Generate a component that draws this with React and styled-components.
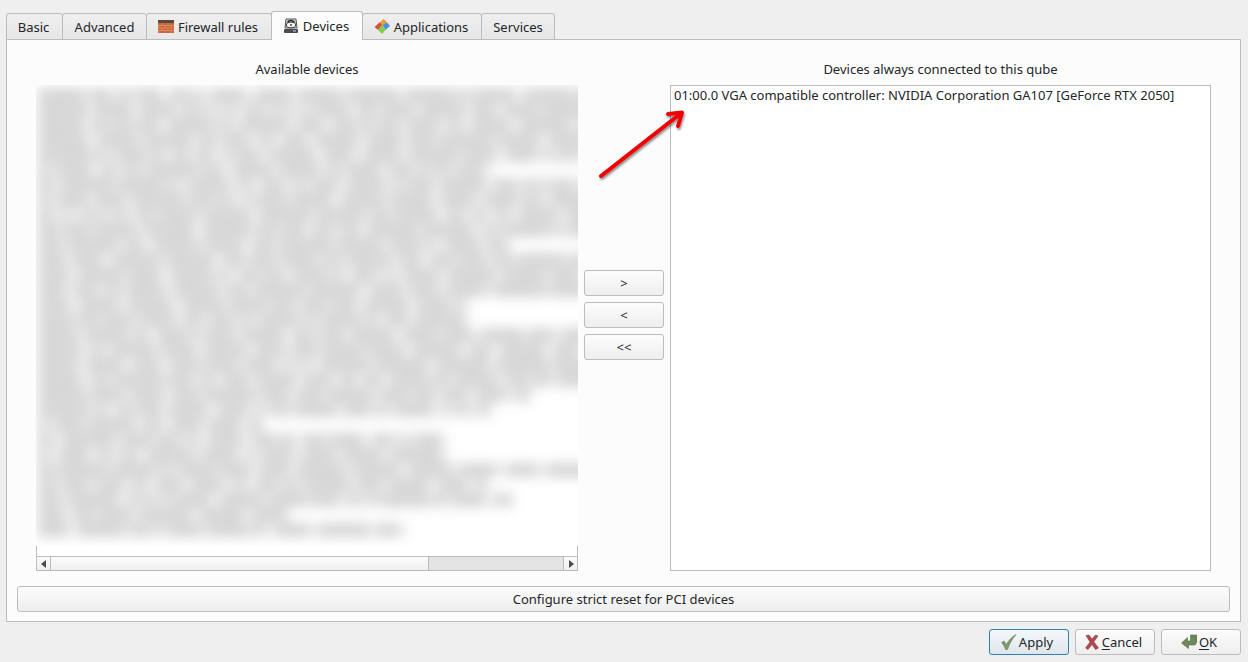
import styled, { createGlobalStyle } from 'styled-components';

const GlobalStyle = createGlobalStyle`
html, body { margin: 0; padding: 0; background: #efefef; }
body { font-family: "Noto Sans", "Open Sans", sans-serif; font-size: 13px; color: #232629; }
`;

const Win = styled.div`
position: relative;
width: 1248px;
height: 662px;
box-sizing: border-box;
padding: 11px 7px 0 6px;
overflow: hidden;
`;

const TabBar = styled.div`
display: flex;
align-items: flex-end;
height: 29px;
position: relative;
z-index: 1;
`;

const Tab = styled.div`
box-sizing: border-box;
display: flex;
align-items: center;
justify-content: center;
gap: 4px;
width: ${p => p.$w}px;
height: ${p => (p.$active ? 29 : 27)}px;
margin-left: ${p => (p.$first ? 0 : -1)}px;
padding-bottom: ${p => (p.$active ? 1 : 0)}px;
padding-right: ${p => (p.$pad ? 2 : 0)}px;
border: 1px solid #bcbcbc;
border-bottom: ${p => (p.$active ? 'none' : '1px solid #bcbcbc')};
border-radius: 3px 3px 0 0;
background: ${p => (p.$active ? '#fcfcfc' : 'linear-gradient(#efefef, #e6e6e6)')};
position: relative;
z-index: ${p => (p.$active ? 2 : 1)};
`;

const Panel = styled.div`
box-sizing: border-box;
width: 1235px;
height: 583px;
border: 1px solid #bcbcbc;
background: #fcfcfc;
margin-top: -1px;
padding: 0 10px 9px;
display: flex;
flex-direction: column;
`;

const DeviceGrid = styled.div`
display: grid;
grid-template-columns: 542px 92px 541px;
grid-template-rows: 23px 486px;
padding: 22px 0 0 19px;
margin-bottom: 15px;
`;

const ColLabel = styled.div`
grid-column: ${p => p.$col};
text-align: center;
line-height: 15px;
height: 23px;
`;

const ListFrame = styled.div`
position: relative;
box-sizing: border-box;
border: 1px solid #bcbcbc;
background: #fff;
display: flex;
flex-direction: column;
`;

const ListBody = styled.div`
flex: 1;
padding: 2px 3px;
line-height: 15px;
white-space: nowrap;
`;

const BlurCover = styled.div`
position: absolute;
top: -1px;
left: -1px;
right: -1px;
height: 461px;
background: #fff;
overflow: hidden;
`;

const BlurText = styled.div`
padding: 2px 0 0 2px;
margin-right: -14px;
filter: blur(7px);
display: flex;
flex-direction: column;
`;

const BlurRow = styled.div`
display: flex;
height: 15px;
overflow: hidden;
`;

const BlurBit = styled.span`
display: block;
flex: none;
height: 10px;
margin-top: 3px;
background: #c4c4c4;
`;

const ScrollBar = styled.div`
box-sizing: border-box;
display: flex;
height: 14px;
border-top: 1px solid #bcbcbc;
background: #e4e4e4;
`;

const ScrollBtn = styled.div`
box-sizing: border-box;
width: 14px;
display: flex;
align-items: center;
justify-content: center;
background: linear-gradient(#fcfcfc, #efefef);
border-${p => (p.$side === 'left' ? 'right' : 'left')}: 1px solid #bcbcbc;
`;

const ScrollThumb = styled.div`
width: 378px;
box-sizing: border-box;
border-right: 1px solid #bcbcbc;
background: linear-gradient(#fcfcfc, #efefef);
`;

const ScrollGroove = styled.div`
flex: 1;
`;

const MoveCol = styled.div`
display: flex;
flex-direction: column;
justify-content: center;
align-items: center;
gap: 6px;
padding-bottom: 27px;
`;

const Btn = styled.div`
box-sizing: border-box;
display: flex;
align-items: center;
justify-content: center;
gap: 2px;
height: 26px;
width: ${p => (p.$wide ? '100%' : '80px')};
padding-right: ${p => (p.$icon ? 4 : 0)}px;
border: 1px solid ${p => (p.$focus ? '#2f7fb0' : '#bcbcbc')};
border-radius: 3px;
background: ${p => (p.$focus ? 'linear-gradient(#f4f8fb, #dfe6eb)' : 'linear-gradient(#fcfcfc, #eeeeee)')};
`;

const Footer = styled.div`
display: flex;
justify-content: flex-end;
gap: 6px;
margin-top: 7px;
`;

const Arrow = styled.svg`
position: absolute;
left: 590px;
top: 100px;
`;

const U = styled.span`
text-decoration: underline;
text-underline-offset: 2px;
`;

// row right edges measured from the picture (page x), 600 runs past the frame
const rowEnds = [
  600, 600, 600, 600, 600, 494, 600, 600, 600, 600,
  508, 600, 600, 600, 466, 466, 600, 600, 600, 600,
  530, 490, 262, 448, 448, 600, 487, 512, 287, 405,
];

function rowBits(i, end) {
  const total = end - 38;
  const bits = [];
  let used = 0;
  let seed = (i + 3) * 7919 + 12345;
  while (used < total) {
    seed = (seed * 48271 + 11) % 2147483647;
    const w = Math.min(10 + ((seed >> 6) % 46), total - used);
    const g = 3 + ((seed >> 3) % 5);
    bits.push({ w, g: used + w + g > total ? 0 : g });
    used += w + g;
  }
  return bits;
}

function BlurredList() {
  return (
    <BlurCover>
      <BlurText>
        {rowEnds.map((end, i) => (
          <BlurRow key={i}>
            {rowBits(i, end).map((b, j) => (
              <BlurBit key={j} style={{ width: b.w, marginRight: b.g }} />
            ))}
          </BlurRow>
        ))}
      </BlurText>
    </BlurCover>
  );
}

const BrickIcon = () => (
  <svg width="16" height="16" viewBox="0 0 16 16">
    <rect x="0" y="1" width="16" height="3" fill="#5a4a3c" />
    <rect x="0" y="4" width="16" height="10" fill="#c8653a" />
    <path d="M0 6.5h16M0 9h16M0 11.5h16M4 4v2.5M10 4v2.5M1 6.5V9M7 6.5V9M13 6.5V9M4 9v2.5M10 9v2.5M1 11.5V14M7 11.5V14M13 11.5V14" stroke="#e09a72" strokeWidth="0.7" fill="none" />
  </svg>
);

const DeviceIcon = () => (
  <svg width="16" height="16" viewBox="0 0 16 16">
    <path d="M3 1h10l1 9H2z" fill="#d6d6d6" stroke="#555" strokeWidth="1" />
    <path d="M4.5 4.5c1-2.5 5.5-3 7 0" fill="none" stroke="#222" strokeWidth="1.6" />
    <ellipse cx="8" cy="7" rx="4.6" ry="2.8" fill="#f4f4f4" stroke="#333" strokeWidth="0.9" />
    <circle cx="8" cy="7" r="0.9" fill="#333" />
    <rect x="1" y="11" width="14" height="4" rx="1" fill="#4c4c4c" />
    <rect x="10" y="12.3" width="3" height="1.2" fill="#9fc6e0" />
  </svg>
);

const PuzzleIcon = () => (
  <svg width="16" height="16" viewBox="0 0 16 16">
    <path d="M0.5 8 6 3l2.5 3L4 11z" fill="#d9503f" />
    <path d="M6 3l3.5-3 3 2.5L13 5 8.5 6z" fill="#e8a13a" />
    <path d="M8.5 6 13 3.5 16 7l-4.5 4z" fill="#4a8fe0" />
    <path d="M4 11l4.5-5 3 5L8 15z" fill="#7ed04a" />
  </svg>
);

const CheckIcon = () => (
  <svg width="16" height="16" viewBox="0 0 16 16">
    <path d="M0.5 8.5 3 7l2.5 3.5C7.5 6.5 10.5 3 15 0.5 11 5 8.5 10 6.5 15.5H4.5C3.5 12.5 2.2 10.2 0.5 8.5z" fill="#7f9a6c" stroke="#5f7a50" strokeWidth="0.5" />
  </svg>
);

const CrossIcon = () => (
  <svg width="16" height="16" viewBox="0 0 16 16">
    <path d="M2 1.5 5 1l3 4 3.5-4L14 2 9.8 7.8 14.5 14l-3 1.5L8 10.5 4 15.5 1.5 14 6 8 2 1.5z" fill="#b5474a" stroke="#7c4a4c" strokeWidth="0.6" />
  </svg>
);

const OkIcon = () => (
  <svg width="16" height="16" viewBox="0 0 16 16">
    <path d="M9.5 1h6.2l.3.8v6.4L14 11H7.5v3.5L0.5 9 6.5 3.5V7h3z" fill="#70895a" stroke="#566d45" strokeWidth="0.6" />
  </svg>
);

const TriLeft = () => (
  <svg width="6" height="8" viewBox="0 0 6 8"><path d="M5 0v8L0 4z" fill="#4d4d4d" /></svg>
);

const TriRight = () => (
  <svg width="6" height="8" viewBox="0 0 6 8"><path d="M1 0v8l5-4z" fill="#4d4d4d" /></svg>
);

export default function App() {
  return (
    <Win>
      <GlobalStyle />
      <TabBar>
        <Tab $first $pad $w={57}>Basic</Tab>
        <Tab $w={85}>Advanced</Tab>
        <Tab $pad $w={126}><BrickIcon />Firewall rules</Tab>
        <Tab $pad $active $w={92}><DeviceIcon />Devices</Tab>
        <Tab $pad $w={120}><PuzzleIcon />Applications</Tab>
        <Tab $w={74}>Services</Tab>
      </TabBar>
      <Panel>
        <DeviceGrid>
          <ColLabel $col={1}>Available devices</ColLabel>
          <ColLabel $col={3}>Devices always connected to this qube</ColLabel>
          <ListFrame>
            <ListBody />
            <BlurredList />
            <ScrollBar>
              <ScrollBtn $side="left"><TriLeft /></ScrollBtn>
              <ScrollThumb />
              <ScrollGroove />
              <ScrollBtn $side="right"><TriRight /></ScrollBtn>
            </ScrollBar>
          </ListFrame>
          <MoveCol>
            <Btn>&gt;</Btn>
            <Btn>&lt;</Btn>
            <Btn>&lt;&lt;</Btn>
          </MoveCol>
          <ListFrame>
            <ListBody>01:00.0 VGA compatible controller: NVIDIA Corporation GA107 [GeForce RTX 2050]</ListBody>
          </ListFrame>
        </DeviceGrid>
        <Btn $wide>Configure strict reset for PCI devices</Btn>
      </Panel>
      <Footer>
        <Btn $focus $icon><CheckIcon />Apply</Btn>
        <Btn $icon><CrossIcon /><span><U>C</U>ancel</span></Btn>
        <Btn $icon><OkIcon /><span><U>O</U>K</span></Btn>
      </Footer>
      <Arrow width="100" height="90" viewBox="0 0 100 90">
        <defs>
          <filter id="arrowShadow" x="-20%" y="-20%" width="140%" height="140%">
            <feDropShadow dx="1" dy="2" stdDeviation="1.2" floodColor="#000" floodOpacity="0.45" />
          </filter>
        </defs>
        <g filter="url(#arrowShadow)" stroke="#f00000" strokeWidth="4" strokeLinecap="round" strokeLinejoin="round" fill="none">
          <path d="M11 76 90 14" />
          <path d="M78 14 92 12.5 88 26" />
        </g>
      </Arrow>
    </Win>
  );
}
